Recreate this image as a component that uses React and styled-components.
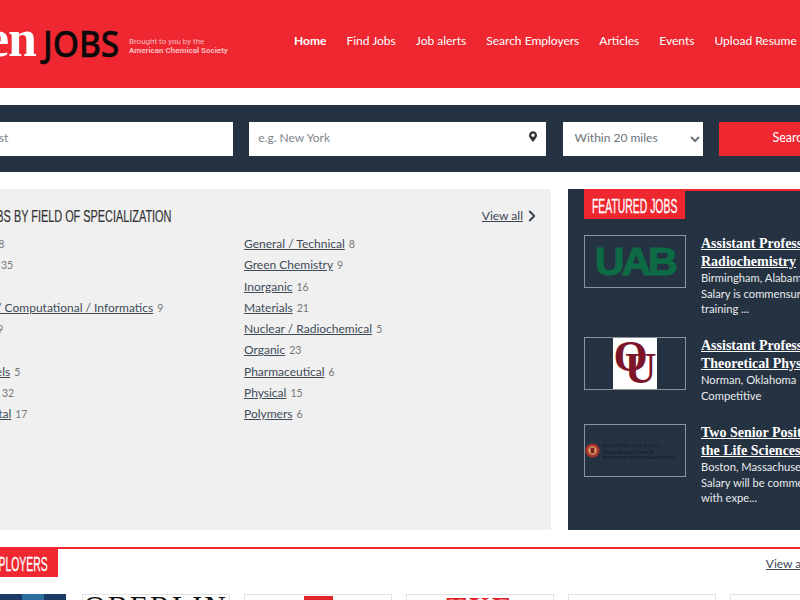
import React from 'react'
import styled, { createGlobalStyle } from 'styled-components'
import { FaMapMarkerAlt } from 'react-icons/fa'
import { ChevronRight } from 'lucide-react'

const RED = '#ee2730'
const NAVY = '#253241'
const BODY = 'Lato, "Noto Sans", sans-serif'
const HEAD = '"Liberation Sans", sans-serif'

const Global = createGlobalStyle`
  html, body { margin: 0; padding: 0; background: #fff; overflow: hidden; }
  body { font-family: ${BODY}; }
`
const Viewport = styled.div`
  width: 800px;
  height: 600px;
  overflow: hidden;
`
const Page = styled.div`
  width: 1060px;
  margin-left: -88px;
`
const Header = styled.header`
  height: 88px;
  background: ${RED};
  display: flex;
  align-items: center;
`
const Logo = styled.div`
  width: 382px;
  display: flex;
  align-items: center;
  justify-content: flex-end;
  flex: none;
`
const LogoEn = styled.span`
  font: bold 52px/1 "Liberation Serif", serif;
  color: #fff;
  margin-right: 7px;
  letter-spacing: -1px;
  margin-bottom: 10px;
`
const LogoJobs = styled.span`
  font: 500 36px/1 "Noto Sans", sans-serif;
  color: #0a0a0a;
  -webkit-text-stroke: 0.5px #0a0a0a;
  transform: scaleX(0.93);
  transform-origin: left center;
  width: 86px;
  flex: none;
`
const LogoTag = styled.div`
  font: 8px/9px Roboto, sans-serif;
  color: #f9bcc0;
  width: 165px;
  margin-top: 3px;
  b { font-weight: 700; display: block; }
`
const Nav = styled.nav`
  display: flex;
  gap: 20px;
  flex: none;
  margin-bottom: 6px;
`
const NavLink = styled.a`
  font: ${p => (p.$active ? 700 : 400)} 12px/16px ${BODY};
  color: #fff;
  white-space: nowrap;
`
const SearchBar = styled.form`
  margin-top: 17px;
  height: 67px;
  box-sizing: border-box;
  background: ${NAVY};
  padding: 17px 16px;
  display: grid;
  grid-template-columns: 305px 297px 140px 144px;
  column-gap: 16.3px;
`
const Field = styled.div`
  position: relative;
  height: 34px;
`
const TextInput = styled.input`
  width: 100%;
  height: 100%;
  box-sizing: border-box;
  border: 0;
  padding: 0 9px 4px;
  font: 12px ${BODY};
  background: #fff;
  &::placeholder { color: #7f858c; opacity: 1; }
`
const PinIcon = styled(FaMapMarkerAlt)`
  position: absolute;
  right: 9px;
  top: 9px;
  width: 8px;
  height: 11px;
  color: #333;
`
const Select = styled.select`
  height: 34px;
  border: 0;
  background: #fff;
  padding: 0 8px 4px;
  font: 12px ${BODY};
  color: #6d737a;
`
const SearchButton = styled.button`
  height: 34px;
  border: 0;
  background: ${RED};
  color: #fff;
  padding: 0 0 4px;
  font: 12.5px ${BODY};
`
const Main = styled.main`
  margin-top: 17px;
  display: grid;
  grid-template-columns: 639px 1fr;
  column-gap: 17px;
  height: 341px;
`
const FieldsPanel = styled.section`
  background: #f0f0f0;
  padding: 17px 15px 0 42px;
`
const PanelHead = styled.div`
  display: flex;
  justify-content: space-between;
  align-items: center;
  height: 20px;
`
const PanelTitle = styled.h2`
  margin: 0;
  font: 400 16.5px/20px ${HEAD};
  color: #333;
  text-transform: uppercase;
  white-space: nowrap;
  -webkit-text-stroke: 0.2px #333;
  transform: scaleX(0.66);
  transform-origin: left center;
`
const ViewAll = styled.a`
  font: 12px/16px ${BODY};
  color: #3b4652;
  text-decoration: underline;
  white-space: nowrap;
  display: inline-flex;
  align-items: center;
  svg { width: 18px; height: 18px; stroke-width: 2.6; margin-right: -5px; }
`
const Columns = styled.div`
  margin-top: 7px;
  display: grid;
  grid-template-columns: 290px 1fr;
`
const FieldRow = styled.div`
  height: 21.25px;
  font: 12px/21px ${BODY};
  white-space: nowrap;
  a { color: #414c59; text-decoration: underline; }
  span { color: #777; font-size: 10.5px; margin-left: 4px; }
`
const FeaturedPanel = styled.aside`
  background: ${NAVY};
  padding-left: 16px;
`
const Featured = styled.div`
  border-top: 2px solid ${RED};
`
const Tab = styled.div`
  width: ${p => p.$w}px;
  height: 28px;
  margin-left: ${p => p.$ml || 0}px;
  box-sizing: border-box;
  background: ${RED};
  padding-left: 8px;
  flex: none;
`
const TabText = styled.div`
  color: #fff;
  font: 400 20px/30px ${HEAD};
  text-transform: uppercase;
  white-space: nowrap;
  -webkit-text-stroke: 0.3px #fff;
  transform: scaleX(0.52);
  transform-origin: left center;
`
const JobList = styled.div`
  margin-top: 16px;
  display: flex;
  flex-direction: column;
  gap: 20.9px;
`
const Job = styled.article`
  display: flex;
  gap: 15px;
  align-items: flex-start;
`
const LogoBox = styled.div`
  width: 102px;
  height: 53px;
  box-sizing: border-box;
  border: 1px solid #8b939c;
  flex: none;
  display: flex;
  align-items: center;
  justify-content: center;
  overflow: hidden;
`
const UabMark = styled.span`
  font: 900 39px/1 "Liberation Sans", sans-serif;
  color: #0d6b45;
  -webkit-text-stroke: 1px #0d6b45;
  letter-spacing: -3px;
  transform: scaleX(1.06);
`
const OuTile = styled.div`
  width: 44px;
  height: 100%;
  background: #fff;
  display: flex;
  align-items: center;
  justify-content: center;
  color: #7d1528;
  font: bold 44px/1 "Liberation Serif", serif;
  span:first-child { margin-top: -14px; }
  span + span { margin-left: -23px; margin-top: 10px; }
`
const BostonMark = styled.div`
  width: 100%;
  display: flex;
  align-items: center;
  gap: 3px;
  color: #0f151c;
  font: 4px/5px "Liberation Sans", sans-serif;
  svg { width: 15px; height: 15px; flex: none; }
  b { display: block; font: 5px/8px "Liberation Serif", serif; letter-spacing: 1px; }
`
const JobBody = styled.div`
  width: 320px;
`
const JobTitle = styled.a`
  display: block;
  font: bold 14px/18px "Liberation Serif", "DejaVu Serif", serif;
  color: #fff;
  text-decoration: underline;
  white-space: nowrap;
`
const JobMeta = styled.div`
  font: 11.2px/15.5px ${BODY};
  color: #e8ebee;
  white-space: nowrap;
  ${JobTitle} + & { margin-top: -1px; }
`
const Employers = styled.section`
  margin-top: 17px;
  border-top: 2px solid ${RED};
`
const EmployersHead = styled.div`
  display: flex;
  justify-content: space-between;
  align-items: flex-start;
`
const EmployersView = styled(ViewAll)`
  margin-top: 6px;
  margin-right: 152px;
`
const Cards = styled.div`
  margin-top: 17px;
  padding-left: 6px;
  display: flex;
  gap: 14px;
`
const Card = styled.div`
  width: 148px;
  height: 80px;
  box-sizing: border-box;
  flex: none;
  border: 1px solid #e2e2e2;
  display: flex;
  justify-content: center;
  overflow: hidden;
`
const PhotoCard = styled(Card)`
  border: 0;
  margin-right: 2px;
  background: linear-gradient(90deg, #1c3a66 0 70%, #2a6f9e 70% 85%, #1c3a66 85%);
`
const Oberlin = styled.span`
  font: 400 30px/1 "Liberation Serif", serif;
  letter-spacing: 2px;
  color: #111;
  margin-top: -4px;
`
const RedBlock = styled.div`
  width: 29px;
  height: 20px;
  margin-top: 1px;
  background: #e2232b;
`
const RedWord = styled.span`
  font: bold 30px/1 "Liberation Serif", serif;
  color: #e2232b;
  margin-top: -3px;
  letter-spacing: 2px;
`

const navItems = ['Find Jobs', 'Job alerts', 'Search Employers', 'Articles', 'Events', 'Upload Resume']

const leftFields = [
  ['Applied', 8], ['Analysis', 35], ['Dyes', 7], ['Biology / Computational / Informatics', 9],
  ['Biology', 9], ['Dyes', 4], ['Solid Fuels', 5], ['Forensic', 32], ['Rare Metal', 17],
]
const rightFields = [
  ['General / Technical', 8], ['Green Chemistry', 9], ['Inorganic', 16], ['Materials', 21],
  ['Nuclear / Radiochemical', 5], ['Organic', 23], ['Pharmaceutical', 6], ['Physical', 15], ['Polymers', 6],
]

const FieldList = ({ items }) => (
  <div>
    {items.map(([name, count], i) => (
      <FieldRow key={i}><a href="#">{name}</a><span>{count}</span></FieldRow>
    ))}
  </div>
)

export default function App() {
  return (
    <Viewport>
      <Global />
      <Page>
        <Header>
          <Logo>
            <LogoEn>c&amp;en</LogoEn>
            <LogoJobs>JOBS</LogoJobs>
            <LogoTag>Brought to you by the<b>American Chemical Society</b></LogoTag>
          </Logo>
          <Nav>
            <NavLink $active>Home</NavLink>
            {navItems.map(n => <NavLink key={n}>{n}</NavLink>)}
          </Nav>
        </Header>

        <SearchBar>
          <Field><TextInput placeholder="e.g. Geologist" /></Field>
          <Field><TextInput placeholder="e.g. New York" /><PinIcon /></Field>
          <Select defaultValue="20"><option value="20">Within 20 miles</option></Select>
          <SearchButton type="button">Search</SearchButton>
        </SearchBar>

        <Main>
          <FieldsPanel>
            <PanelHead>
              <PanelTitle>Find jobs by field of specialization</PanelTitle>
              <ViewAll>View all <ChevronRight /></ViewAll>
            </PanelHead>
            <Columns>
              <FieldList items={leftFields} />
              <FieldList items={rightFields} />
            </Columns>
          </FieldsPanel>
          <FeaturedPanel>
            <Featured>
              <Tab $w={101}><TabText>Featured jobs</TabText></Tab>
              <JobList>
                <Job>
                  <LogoBox><UabMark>UAB</UabMark></LogoBox>
                  <JobBody>
                    <JobTitle>Assistant Professor of</JobTitle>
                    <JobTitle>Radiochemistry</JobTitle>
                    <JobMeta>Birmingham, Alabama</JobMeta>
                    <JobMeta>Salary is commensurate with</JobMeta>
                    <JobMeta>training ...</JobMeta>
                  </JobBody>
                </Job>
                <Job>
                  <LogoBox><OuTile><span>O</span><span>U</span></OuTile></LogoBox>
                  <JobBody>
                    <JobTitle>Assistant Professor of</JobTitle>
                    <JobTitle>Theoretical Physics</JobTitle>
                    <JobMeta>Norman, Oklahoma</JobMeta>
                    <JobMeta>Competitive</JobMeta>
                  </JobBody>
                </Job>
                <Job>
                  <LogoBox>
                    <BostonMark>
                      <svg viewBox="0 0 16 16">
                        <circle cx="8" cy="8" r="7.5" fill="#a8342c" />
                        <circle cx="8" cy="8" r="4.5" fill="#d8a070" />
                        <rect x="6" y="5" width="4" height="6" fill="#7a2018" />
                      </svg>
                      <div><b>BOSTON COLLEGE</b>SCHILLER INSTITUTE FOR<br />INTEGRATED SCIENCE AND SOCIETY</div>
                    </BostonMark>
                  </LogoBox>
                  <JobBody>
                    <JobTitle>Two Senior Positions in</JobTitle>
                    <JobTitle>the Life Sciences</JobTitle>
                    <JobMeta>Boston, Massachusetts</JobMeta>
                    <JobMeta>Salary will be commensurate</JobMeta>
                    <JobMeta>with expe...</JobMeta>
                  </JobBody>
                </Job>
              </JobList>
            </Featured>
          </FeaturedPanel>
        </Main>

        <Employers>
          <EmployersHead>
            <Tab $w={107} $ml={39}><TabText>Top employers</TabText></Tab>
            <EmployersView>View all <ChevronRight /></EmployersView>
          </EmployersHead>
          <Cards>
            <PhotoCard />
            <Card><Oberlin>OBERLIN</Oberlin></Card>
            <Card><RedBlock /></Card>
            <Card><RedWord>TXE</RedWord></Card>
            <Card />
            <Card />
          </Cards>
        </Employers>
      </Page>
    </Viewport>
  )
}
